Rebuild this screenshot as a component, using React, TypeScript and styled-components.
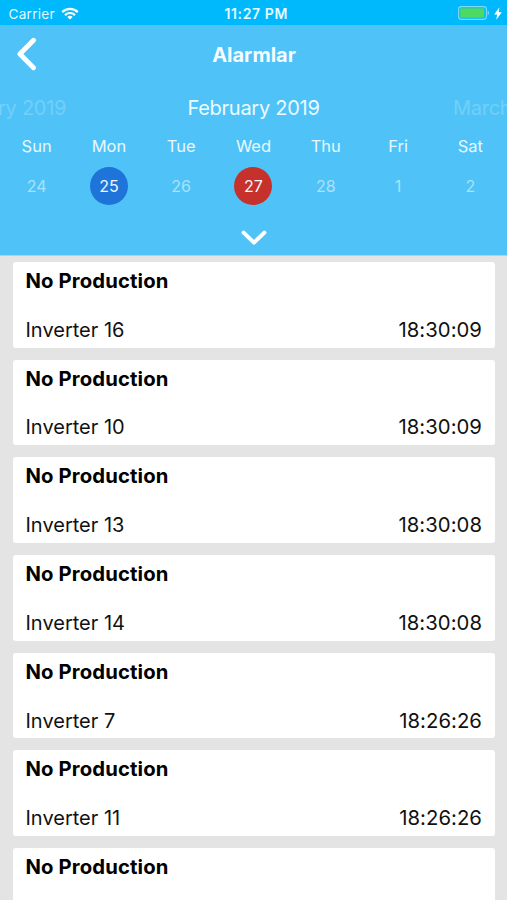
import React from "react";
import styled, { createGlobalStyle } from "styled-components";

const GlobalStyle = createGlobalStyle`
  * { box-sizing: border-box; }
  html, body { margin: 0; padding: 0; }
  body {
    overflow: hidden;
    font-family: Inter, "Liberation Sans", sans-serif;
    background: #e4e4e4;
  }
`;

const Screen = styled.div`
  width: 507px;
  height: 900px;
  overflow: hidden;
  display: flex;
  flex-direction: column;
  background: #e4e4e4;
`;

const StatusBar = styled.div`
  flex: none;
  height: 25px;
  padding: 2px 5px 0 8.5px;
  display: grid;
  grid-template-columns: 1fr auto 1fr;
  align-items: center;
  background: #00b9fd;
  color: #fff;
`;

const Carrier = styled.div`
  display: flex;
  align-items: center;
  gap: 6.5px;
  font-size: 13.6px;
  line-height: 20px;
  letter-spacing: 0.25px;
  color: #e2f7ff;
`;

const Clock = styled.div`
  font-size: 14px;
  line-height: 20px;
  font-weight: 600;
  letter-spacing: 0.6px;
  padding-left: 2px;
  color: #e8f9ff;
`;

const Power = styled.div`
  display: flex;
  align-items: center;
  justify-content: flex-end;
  gap: 4px;
  padding-bottom: 1px;
`;

const Header = styled.header`
  flex: none;
  height: 231px;
  display: flex;
  flex-direction: column;
  background: #4fc3f7;
  border-bottom: 1px solid #a8d3e8;
`;

const NavBar = styled.div`
  height: 57.5px;
  display: grid;
  grid-template-columns: 60px 1fr 60px;
  align-items: center;
`;

const BackButton = styled.button`
  border: 0;
  padding: 0 0 0 16px;
  background: none;
  display: flex;
`;

const Title = styled.h1`
  margin: 0;
  padding: 2px 0 0 1px;
  text-align: center;
  color: #f4fcff;
  font-size: 20px;
  line-height: 24px;
  font-weight: 700;
`;

const Months = styled.div`
  height: 51px;
  display: flex;
  justify-content: center;
  align-items: center;
  overflow: hidden;
`;

const Month = styled.div<{ $faded?: boolean; $indent?: number }>`
  flex: none;
  width: 253.5px;
  padding-left: ${(p) => p.$indent ?? 0}px;
  text-align: center;
  white-space: nowrap;
  font-size: 20px;
  line-height: 26px;
  letter-spacing: -0.27px;
  color: ${(p) => (p.$faded ? "#72cff9" : "#edfaff")};
`;

const Week = styled.div`
  display: grid;
  grid-template-columns: repeat(7, 72.3px);
  justify-content: center;
`;

const DayColumn = styled.div`
  display: flex;
  flex-direction: column;
  align-items: center;
`;

const DayName = styled.div`
  height: 33px;
  line-height: 24px;
  font-size: 16.5px;
  color: #e6f8ff;
`;

const DayNumber = styled.div<{ $fill?: string }>`
  width: 38px;
  height: 38px;
  border-radius: 50%;
  line-height: 38px;
  text-align: center;
  font-size: 16px;
  background: ${(p) => p.$fill ?? "transparent"};
  color: ${(p) => (p.$fill ? "#f0f6ff" : "#a9e2fb")};
`;

const Expand = styled.button`
  border: 0;
  padding: 24px 0 0;
  background: none;
  display: flex;
  justify-content: center;
`;

const List = styled.main`
  flex: none;
  padding: 6px 12.5px 0 13px;
  display: flex;
  flex-direction: column;
  gap: 12.2px;
`;

const Card = styled.article`
  height: 85.5px;
  padding: 7px 12.5px 0;
  border-radius: 3px;
  background: #fff;
  color: #111;
`;

const CardTitle = styled.h2`
  margin: 0 0 24.8px;
  font-size: 20.3px;
  line-height: 24px;
  font-weight: 650;
  letter-spacing: 0.12px;
  color: #000;
`;

const CardRow = styled.div`
  display: flex;
  justify-content: space-between;
  font-size: 20px;
  line-height: 24px;
`;

const Device = styled.span`
  white-space: nowrap;
`;

const Time = styled.time`
  font-size: 20.3px;
  letter-spacing: 0.05px;
`;

const days = [
  { name: "Sun", date: 24 },
  { name: "Mon", date: 25, fill: "#1e74d8" },
  { name: "Tue", date: 26 },
  { name: "Wed", date: 27, fill: "#c6322b" },
  { name: "Thu", date: 28 },
  { name: "Fri", date: 1 },
  { name: "Sat", date: 2 },
];

const alarms = [
  { device: "Inverter 16", time: "18:30:09" },
  { device: "Inverter 10", time: "18:30:09" },
  { device: "Inverter 13", time: "18:30:08" },
  { device: "Inverter 14", time: "18:30:08" },
  { device: "Inverter 7", time: "18:26:26" },
  { device: "Inverter 11", time: "18:26:26" },
  { device: "Inverter 12", time: "18:26:26" },
];

const WifiIcon = () => (
  <svg width="18" height="13" viewBox="0 0 18 13" fill="none" stroke="#fff" strokeWidth="2.2">
    <path d="M1.2 5.1C5.5.8 12.5.8 16.8 5.1" />
    <path d="M4 8.1C6.8 5.3 11.2 5.3 14 8.1" />
    <path d="M9 12.6 6.3 9.9C7.8 8.5 10.2 8.5 11.7 9.9Z" fill="#fff" stroke="none" />
  </svg>
);

const BatteryIcon = () => (
  <svg width="32" height="14" viewBox="0 0 32 14">
    <rect x="0.6" y="0.6" width="27.8" height="12.8" rx="2.8" fill="none" stroke="#80d9fb" strokeWidth="1.1" />
    <rect x="2.2" y="2.2" width="24" height="9.6" rx="1" fill="#4cd964" />
    <path d="M29.7 4.6C31.5 5.3 31.5 8.7 29.7 9.4Z" fill="#80d9fb" />
  </svg>
);

const BoltIcon = () => (
  <svg width="8" height="13" viewBox="0 0 8 13" fill="#fff">
    <path d="M5.4 0.3 0.2 7.5H3.1L2.3 12.7 7.8 5.3H4.7Z" />
  </svg>
);

export default function App() {
  return (
    <>
      <GlobalStyle />
      <Screen>
        <StatusBar>
          <Carrier>
            Carrier
            <WifiIcon />
          </Carrier>
          <Clock>11:27 PM</Clock>
          <Power>
            <BatteryIcon />
            <BoltIcon />
          </Power>
        </StatusBar>
        <Header>
          <NavBar>
            <BackButton aria-label="Back">
              <svg width="22" height="34" viewBox="0 0 22 34" fill="none" stroke="#fff" strokeWidth="4.8" strokeLinecap="round" strokeLinejoin="round">
                <path d="M17.5 3.2 3.9 17 17.5 30.8" />
              </svg>
            </BackButton>
            <Title>Alarmlar</Title>
          </NavBar>
          <Months>
            <Month $faded $indent={8}>January 2019</Month>
            <Month>February 2019</Month>
            <Month $faded>March 2019</Month>
          </Months>
          <Week>
            {days.map((d) => (
              <DayColumn key={d.name}>
                <DayName>{d.name}</DayName>
                <DayNumber $fill={d.fill}>{d.date}</DayNumber>
              </DayColumn>
            ))}
          </Week>
          <Expand aria-label="Expand calendar">
            <svg width="28" height="17" viewBox="0 0 28 17" fill="none" stroke="#fff" strokeWidth="4" strokeLinecap="round" strokeLinejoin="round">
              <path d="M3.6 3.6 14 13.6 24.4 3.6" />
            </svg>
          </Expand>
        </Header>
        <List>
          {alarms.map((a) => (
            <Card key={a.device}>
              <CardTitle>No Production</CardTitle>
              <CardRow>
                <Device>{a.device}</Device>
                <Time>{a.time}</Time>
              </CardRow>
            </Card>
          ))}
        </List>
      </Screen>
    </>
  );
}
